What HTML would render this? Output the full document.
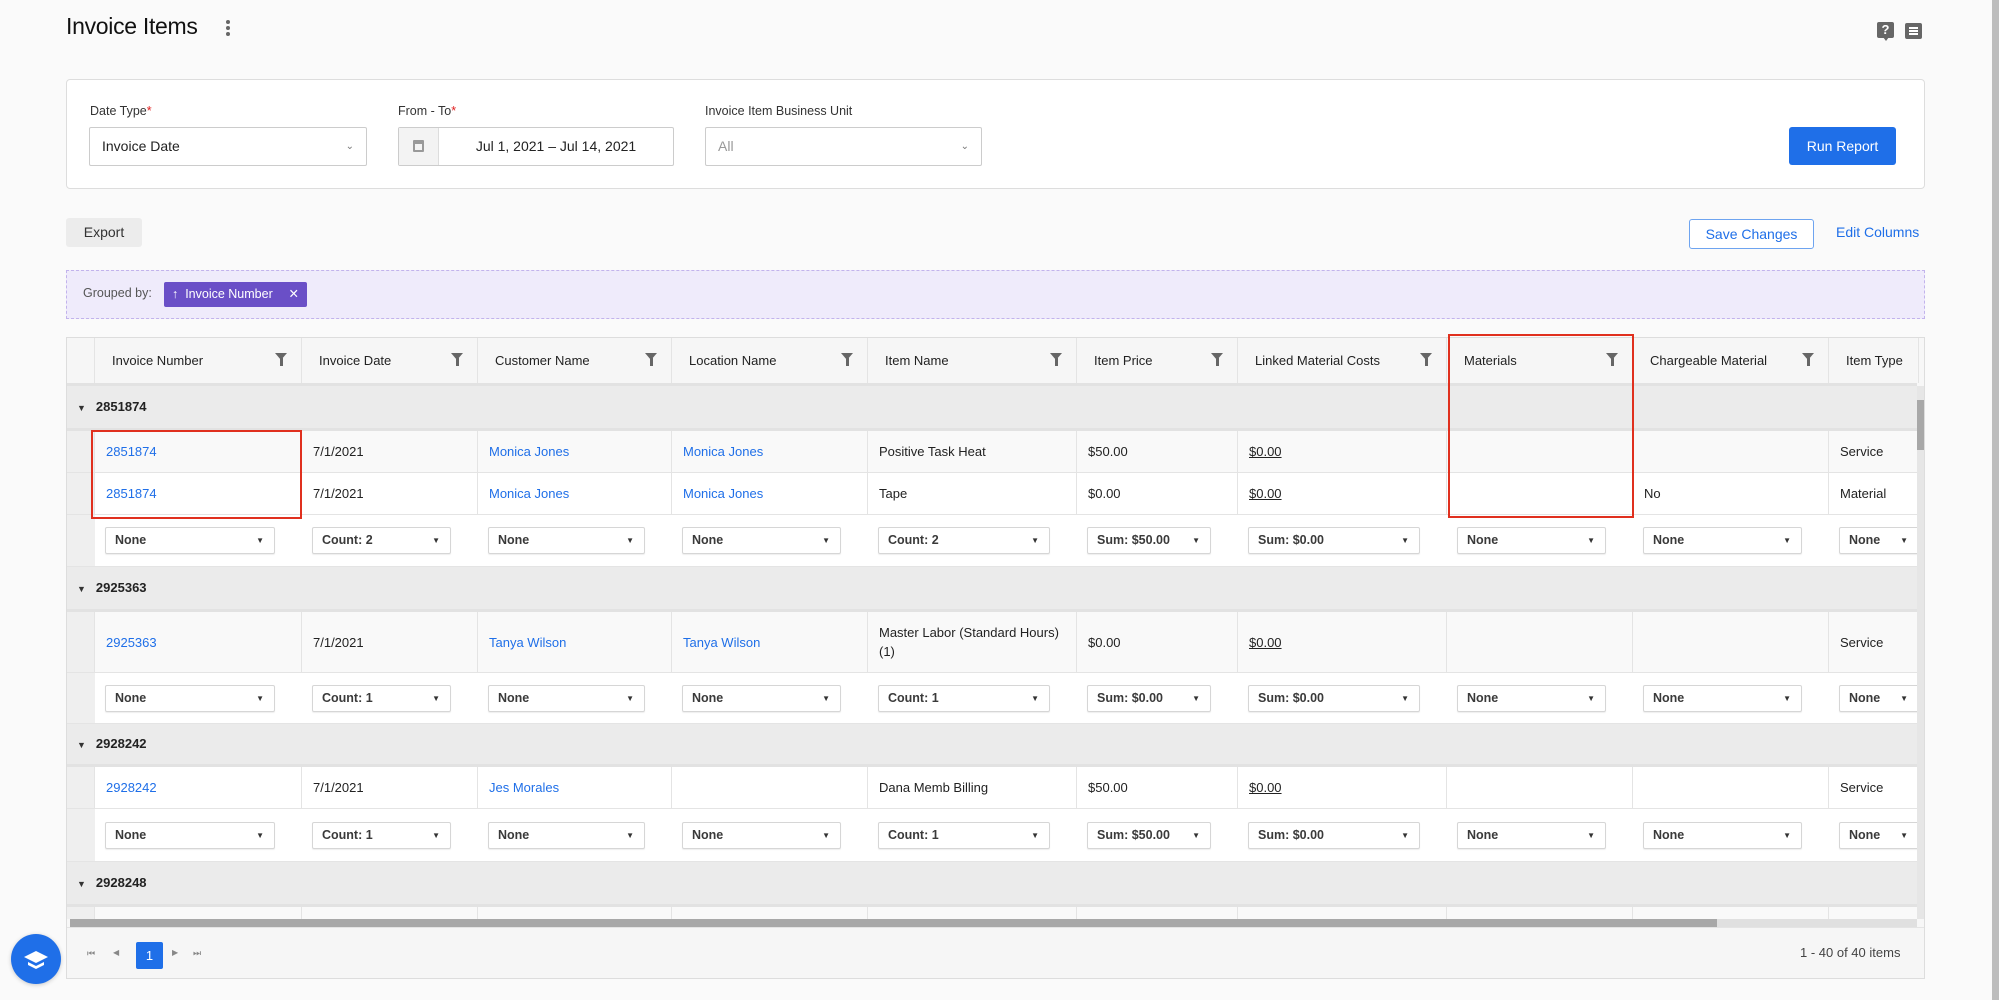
<!DOCTYPE html>
<html><head><meta charset="utf-8"><style>
*{box-sizing:border-box;margin:0;padding:0}
body{width:1999px;height:1000px;background:#fafafa;font-family:"Liberation Sans",sans-serif;color:#222;position:relative;overflow:hidden;font-size:13px}
.abs{position:absolute}
h1{position:absolute;left:66px;top:13px;font-size:23px;font-weight:400;color:#111;letter-spacing:-0.3px}
.card{left:66px;top:79px;width:1859px;height:110px;background:#fff;border:1px solid #ddd;border-radius:4px}
.lbl{font-size:12.5px;color:#333;top:104px}
.lbl b{color:#e02020;font-weight:400}
.sel{top:127px;height:39px;border:1px solid #ccc;border-radius:2px;background:#fff;font-size:14px;padding:0 12px;line-height:37px}
.chev{position:absolute;right:12px;top:0;font-size:10px;color:#777}
.btn{background:#1f6fe8;color:#fff;border-radius:3px;font-size:14px;text-align:center}
.tbl{left:66px;top:337px;width:1859px;height:642px;border:1px solid #ddd;background:#f7f7f7;overflow:hidden}
.hdr{position:absolute;left:0;top:0;height:48px;width:1850px;background:#f6f6f6;border-bottom:3px solid #e2e2e2;display:flex}
.c{flex:none;border-right:1px solid #e4e4e4;position:relative;overflow:hidden;white-space:nowrap}
.hdr .c{padding-left:17px;line-height:46px;font-size:13px;color:#222}
.fi{position:absolute;right:14px;top:15px;width:0;height:0;border-left:6px solid transparent;border-right:6px solid transparent;border-top:7px solid #666}
.fi:after{content:"";position:absolute;left:-1.5px;top:-2px;width:3px;height:8px;background:#666}
.body{position:absolute;left:0;top:48px;width:1850px;height:533px;overflow:hidden}
.row{display:flex;border-bottom:1px solid #e4e4e4}
.row .c{padding-left:11px;display:flex;align-items:center;font-size:13px}
.g{height:45px;background:#ebebeb;border-bottom:3px solid #e2e2e2;font-weight:700;font-size:13px;line-height:42px;padding-left:10px}
.g i{font-style:normal;font-size:9px;color:#333;margin-right:10px;font-weight:400}
.d1 .c{background:#f9f9f9}.d2 .c{background:#fff}
.row .c.gut{background:#efefef;padding:0}
.a .c{background:#fff;border-right:none;padding-left:10px}
.dd{height:27px;width:calc(100% - 27px);border:1px solid #d6d6d6;border-radius:2px;font-size:12.5px;font-weight:700;color:#3a3a3a;padding-left:9px;line-height:25px;position:relative;box-shadow:0 1px 1px #eee}
.dd:after{content:"▼";position:absolute;right:10px;top:0;font-size:8px;color:#333}
a{color:#1f6fe8;text-decoration:none}
u{text-decoration:underline;color:#222}
.w0{width:28px}.w1{width:207px}.w2{width:176px}.w3{width:194px}.w4{width:196px}.w5{width:209px}.w6{width:161px}.w7{width:209px}.w8{width:186px}.w9{width:196px}.w10{width:90px}
.red{border:2px solid #e0301e}
</style></head><body>
<h1>Invoice Items</h1>
<div class="abs" style="left:226px;top:20px;width:4px">
<div style="width:4px;height:4px;border-radius:2px;background:#666;margin-bottom:2px"></div><div style="width:4px;height:4px;border-radius:2px;background:#666;margin-bottom:2px"></div><div style="width:4px;height:4px;border-radius:2px;background:#666"></div></div>
<div class="abs" style="left:1877px;top:22px;width:17px;height:16px;background:#666;border-radius:2px;color:#fff;font-size:13px;font-weight:700;text-align:center;line-height:16px">?</div>
<div class="abs" style="left:1883px;top:37px;width:0;height:0;border-left:3px solid transparent;border-right:3px solid transparent;border-top:4px solid #666"></div>
<div class="abs" style="left:1905px;top:23px;width:17px;height:16px;background:#666;border-radius:2px">
<div style="margin:4px 0 0 4px;width:9px;height:2px;background:#fff;box-shadow:0 3px #fff,0 6px #fff"></div></div>
<div class="abs" style="left:1992px;top:0;width:7px;height:1000px;background:#bdbdbd"></div>

<div class="abs card"></div>
<div class="abs lbl" style="left:90px">Date Type<b>*</b></div>
<div class="abs lbl" style="left:398px">From - To<b>*</b></div>
<div class="abs lbl" style="left:705px">Invoice Item Business Unit</div>
<div class="abs sel" style="left:89px;width:278px">Invoice Date<span class="chev">⌄</span></div>
<div class="abs sel" style="left:398px;width:276px;padding:0">
<div style="position:absolute;left:0;top:0;width:40px;height:37px;background:#f3f3f3;border-right:1px solid #ddd"><div style="position:absolute;left:14px;top:12px;width:11px;height:12px;border:2px solid #999;border-top-width:4px;border-radius:1px"></div></div>
<div style="position:absolute;left:40px;right:0;text-align:center">Jul 1, 2021 – Jul 14, 2021</div></div>
<div class="abs sel" style="left:705px;width:277px;color:#999">All<span class="chev">⌄</span></div>
<div class="abs btn" style="left:1789px;top:127px;width:107px;height:38px;line-height:38px">Run Report</div>

<div class="abs" style="left:66px;top:218px;width:76px;height:29px;background:#ececec;border-radius:3px;text-align:center;line-height:29px;font-size:14px;color:#333">Export</div>
<div class="abs" style="left:1689px;top:219px;width:125px;height:30px;border:1px solid #6ea4f0;border-radius:3px;background:#fff;color:#1f6fe8;text-align:center;line-height:28px;font-size:14px">Save Changes</div>
<div class="abs" style="left:1836px;top:224px;color:#1f6fe8;font-size:14px">Edit Columns</div>

<div class="abs" style="left:66px;top:270px;width:1859px;height:49px;background:#efebfb;border:1px dashed #c2b3ec"></div>
<div class="abs" style="left:83px;top:286px;font-size:12.5px;color:#555">Grouped by:</div>
<div class="abs" style="left:164px;top:282px;width:143px;height:25px;background:#6a4fc7;border-radius:2px;color:#fff;font-size:12.5px;line-height:25px;padding-left:8px">↑&nbsp; Invoice Number <span style="position:absolute;right:8px">✕</span></div>

<div class="abs tbl">
<div class="hdr"><div class="c w0"></div>
<div class="c w1">Invoice Number<span class="fi"></span></div><div class="c w2">Invoice Date<span class="fi"></span></div><div class="c w3">Customer Name<span class="fi"></span></div><div class="c w4">Location Name<span class="fi"></span></div><div class="c w5">Item Name<span class="fi"></span></div><div class="c w6">Item Price<span class="fi"></span></div><div class="c w7">Linked Material Costs<span class="fi"></span></div><div class="c w8">Materials<span class="fi"></span></div><div class="c w9">Chargeable Material<span class="fi"></span></div><div class="c w10">Item Type</div></div>
<div class="body">
<div class="g"><i>▼</i>2851874</div>
<div class="row d1" style="height:42px"><div class="c w0 gut"></div><div class="c w1"><a>2851874</a></div><div class="c w2">7/1/2021</div><div class="c w3"><a>Monica Jones</a></div><div class="c w4"><a>Monica Jones</a></div><div class="c w5">Positive Task Heat</div><div class="c w6">$50.00</div><div class="c w7"><u>$0.00</u></div><div class="c w8"></div><div class="c w9"></div><div class="c w10">Service</div></div>
<div class="row d2" style="height:42px"><div class="c w0 gut"></div><div class="c w1"><a>2851874</a></div><div class="c w2">7/1/2021</div><div class="c w3"><a>Monica Jones</a></div><div class="c w4"><a>Monica Jones</a></div><div class="c w5">Tape</div><div class="c w6">$0.00</div><div class="c w7"><u>$0.00</u></div><div class="c w8"></div><div class="c w9">No</div><div class="c w10">Material</div></div>
<div class="row a" style="height:52px"><div class="c w0 gut"></div><div class="c w1"><div class="dd">None</div></div><div class="c w2"><div class="dd">Count: 2</div></div><div class="c w3"><div class="dd">None</div></div><div class="c w4"><div class="dd">None</div></div><div class="c w5"><div class="dd">Count: 2</div></div><div class="c w6"><div class="dd">Sum: $50.00</div></div><div class="c w7"><div class="dd">Sum: $0.00</div></div><div class="c w8"><div class="dd">None</div></div><div class="c w9"><div class="dd">None</div></div><div class="c w10"><div class="dd" style="width:100px">None</div></div></div>
<div class="g"><i>▼</i>2925363</div>
<div class="row d1" style="height:61px"><div class="c w0 gut"></div><div class="c w1"><a>2925363</a></div><div class="c w2">7/1/2021</div><div class="c w3"><a>Tanya Wilson</a></div><div class="c w4"><a>Tanya Wilson</a></div><div class="c w5" style="white-space:normal;line-height:19px">Master Labor (Standard Hours) (1)</div><div class="c w6">$0.00</div><div class="c w7"><u>$0.00</u></div><div class="c w8"></div><div class="c w9"></div><div class="c w10">Service</div></div>
<div class="row a" style="height:51px"><div class="c w0 gut"></div><div class="c w1"><div class="dd">None</div></div><div class="c w2"><div class="dd">Count: 1</div></div><div class="c w3"><div class="dd">None</div></div><div class="c w4"><div class="dd">None</div></div><div class="c w5"><div class="dd">Count: 1</div></div><div class="c w6"><div class="dd">Sum: $0.00</div></div><div class="c w7"><div class="dd">Sum: $0.00</div></div><div class="c w8"><div class="dd">None</div></div><div class="c w9"><div class="dd">None</div></div><div class="c w10"><div class="dd" style="width:100px">None</div></div></div>
<div class="g" style="height:43px;line-height:40px"><i>▼</i>2928242</div>
<div class="row d2" style="height:42px"><div class="c w0 gut"></div><div class="c w1"><a>2928242</a></div><div class="c w2">7/1/2021</div><div class="c w3"><a>Jes Morales</a></div><div class="c w4"></div><div class="c w5">Dana Memb Billing</div><div class="c w6">$50.00</div><div class="c w7"><u>$0.00</u></div><div class="c w8"></div><div class="c w9"></div><div class="c w10">Service</div></div>
<div class="row a" style="height:53px"><div class="c w0 gut"></div><div class="c w1"><div class="dd">None</div></div><div class="c w2"><div class="dd">Count: 1</div></div><div class="c w3"><div class="dd">None</div></div><div class="c w4"><div class="dd">None</div></div><div class="c w5"><div class="dd">Count: 1</div></div><div class="c w6"><div class="dd">Sum: $50.00</div></div><div class="c w7"><div class="dd">Sum: $0.00</div></div><div class="c w8"><div class="dd">None</div></div><div class="c w9"><div class="dd">None</div></div><div class="c w10"><div class="dd" style="width:100px">None</div></div></div>
<div class="g"><i>▼</i>2928248</div>
<div class="row d1" style="height:42px"><div class="c w0 gut"></div><div class="c w1"></div><div class="c w2"></div><div class="c w3"></div><div class="c w4"></div><div class="c w5"></div><div class="c w6"></div><div class="c w7"></div><div class="c w8"></div><div class="c w9"></div><div class="c w10"></div></div>
</div>
<div class="abs" style="left:1850px;top:48px;width:9px;height:533px;background:#e6e6e6"><div style="margin-top:14px;height:50px;background:#a8a8a8"></div></div>
<div class="abs" style="left:3px;top:581px;width:1847px;height:8px;background:#e0e0e0"><div style="width:1647px;height:8px;background:#a8a8a8"></div></div>
<div class="abs" style="left:0;top:589px;width:1859px;height:53px;background:#f6f6f6;border-top:1px solid #e4e4e4"></div>
<div class="abs" style="left:20px;top:610px;font-size:9px;color:#888">⏮</div>
<div class="abs" style="left:46px;top:610px;font-size:8px;color:#888">◀</div>
<div class="abs" style="left:69px;top:604px;width:27px;height:27px;background:#1f6fe8;color:#fff;border-radius:2px;text-align:center;line-height:27px;font-size:13px">1</div>
<div class="abs" style="left:105px;top:610px;font-size:8px;color:#888">▶</div>
<div class="abs" style="left:126px;top:610px;font-size:9px;color:#888">⏭</div>
<div class="abs" style="left:1733px;top:607px;font-size:13px;color:#444">1 - 40 of 40 items</div>
</div>

<div class="abs red" style="left:91px;top:430px;width:211px;height:89px"></div>
<div class="abs red" style="left:1448px;top:334px;width:186px;height:184px"></div>

<div class="abs" style="left:11px;top:934px;width:50px;height:50px;border-radius:25px;background:#1f6fe8;box-shadow:0 1px 4px rgba(0,0,0,.2)">
<svg width="50" height="50" viewBox="0 0 50 50"><path d="M25 17 L37 23 L25 29 L13 23 Z" fill="#fff"/><path d="M17 28 L25 32 L33 28 L33 31 L25 35 L17 31 Z" fill="#fff"/></svg></div>
</body></html>
